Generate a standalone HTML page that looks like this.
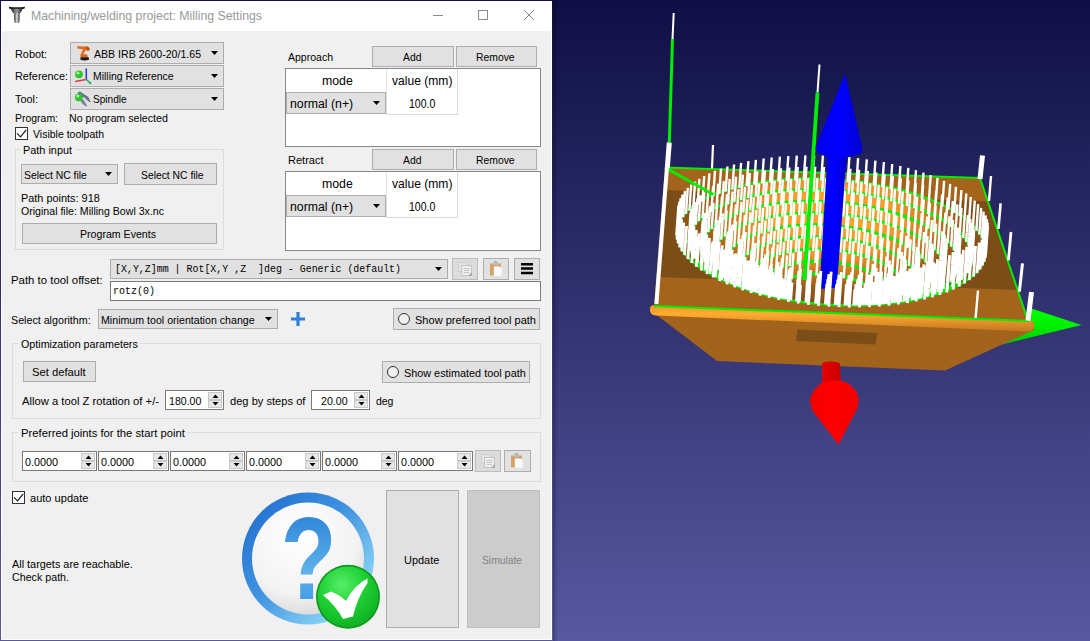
<!DOCTYPE html>
<html><head><meta charset="utf-8"><title>Machining/welding project: Milling Settings</title>
<style>
html,body{margin:0;padding:0}
body{width:1090px;height:641px;overflow:hidden;position:relative;background:linear-gradient(#0f0f45,#5858a0);font-family:"Liberation Sans",sans-serif}
.b{position:absolute;box-sizing:border-box}
.t{position:absolute;white-space:pre;transform-origin:0 50%;display:block}
#dlg{position:absolute;left:0;top:0;width:553px;height:641px}
#view{position:absolute;left:553px;top:0;width:537px;height:641px}
</style></head><body>
<div id="view"><svg width="537" height="641" viewBox="553 0 537 641" style="display:block">
<defs>
<linearGradient id="bg" x1="0" y1="0" x2="0" y2="1"><stop offset="0" stop-color="#0f0f45"/><stop offset="1" stop-color="#5858a0"/></linearGradient>
<linearGradient id="edge" x1="0" y1="0" x2="0.04" y2="1"><stop offset="0" stop-color="#f09a28"/><stop offset=".35" stop-color="#ffab30"/><stop offset="1" stop-color="#c47a20"/></linearGradient>
<radialGradient id="bowl" cx=".5" cy=".32" r=".5" gradientTransform="translate(.5 .32) scale(1 1.3) translate(-.5 -.32)"><stop offset="0" stop-color="#ffa62e"/><stop offset=".4" stop-color="#f89c2b"/><stop offset=".66" stop-color="#c47a21"/><stop offset=".85" stop-color="#94591a"/><stop offset="1" stop-color="#84501a"/></radialGradient>
<linearGradient id="blu" x1="0" x2="1"><stop offset="0" stop-color="#0000e6"/><stop offset=".5" stop-color="#0000ff"/><stop offset="1" stop-color="#0000d0"/></linearGradient>
<linearGradient id="shadow" x1="0" x2="1"><stop offset="0" stop-color="#000" stop-opacity=".3"/><stop offset="1" stop-color="#000" stop-opacity="0"/></linearGradient>
<linearGradient id="garr" x1="0" y1="0" x2="0" y2="1"><stop offset="0" stop-color="#00ff00"/><stop offset=".5" stop-color="#00f000"/><stop offset="1" stop-color="#00c400"/></linearGradient>
<linearGradient id="redsh" x1="0" x2="1"><stop offset="0" stop-color="#e80000"/><stop offset=".5" stop-color="#d80000"/><stop offset="1" stop-color="#c80000"/></linearGradient>
<linearGradient id="redc" x1="0" x2="1"><stop offset="0" stop-color="#f00000"/><stop offset=".45" stop-color="#ff0000"/><stop offset="1" stop-color="#f20000"/></linearGradient>
</defs>
<rect x="553" y="0" width="537" height="641" fill="url(#bg)"/>
<rect x="552" y="0" width="6" height="641" fill="url(#shadow)"/>
<path d="M1081.5 325L1030 308L1002 344.5Z" fill="url(#garr)"/>
<path d="M650 310L717 361L945 370.5L1034 330L1034 322L650 306Z" fill="#a2631c"/>
<path d="M797.5 329.5L877.5 333L875.5 344.5L796 341Z" fill="#7b4e18"/>
<path d="M654 305L1028 320Q1035 321 1034 327Q1033 332 1027 331.5L656 315.5Q650 315 650 310Q650.5 305 654 305Z" fill="url(#edge)"/>
<path d="M665.0 167.5L980.0 178.0L1028.0 321.0L654.0 306.0Z" fill="#a4641c"/>
<path d="M663.3 190L988 201.5L1017.5 290L657.3 277Z" fill="#7c4d17"/>
<clipPath id="rimclip"><path d="M984.6 242.7L983.3 239.4L981.6 236.1L979.6 232.8L977.1 229.6L974.3 226.4L971.0 223.2L967.5 220.1L963.6 217.1L959.3 214.2L954.8 211.3L949.9 208.6L944.8 205.9L939.4 203.3L933.7 200.8L927.8 198.5L921.7 196.2L915.4 194.1L908.9 192.1L902.2 190.2L895.4 188.5L888.4 186.9L881.3 185.4L874.1 184.1L866.8 182.9L859.4 181.8L852.0 180.9L844.5 180.1L837.1 179.5L829.6 179.0L822.1 178.7L814.6 178.5L807.2 178.5L799.8 178.6L792.5 178.9L785.3 179.3L778.2 179.9L771.2 180.6L764.4 181.4L757.7 182.4L751.1 183.6L744.8 184.9L738.6 186.3L732.7 187.9L727.0 189.6L721.5 191.4L716.2 193.3L711.3 195.4L706.6 197.6L702.2 199.9L698.1 202.3L694.4 204.9L691.0 207.5L687.9 210.2L685.1 213.1L682.8 216.0L680.8 218.9L679.2 222.0L678.0 225.1L677.2 228.3L676.8 231.5L676.8 234.8L677.3 238.1L678.1 241.4L679.4 244.7L681.1 248.1L683.2 251.4L685.8 254.7L688.8 258.0L692.2 261.3L696.0 264.5L700.3 267.7L704.9 270.8L709.9 273.8L715.3 276.8L721.1 279.6L727.2 282.4L733.7 285.0L740.5 287.6L747.5 289.9L754.9 292.2L762.5 294.3L770.3 296.2L778.4 298.0L786.6 299.5L795.0 301.0L803.5 302.2L812.1 303.2L820.8 304.1L829.5 304.7L838.3 305.2L847.0 305.4L855.6 305.5L864.2 305.3L872.7 304.9L881.0 304.4L889.2 303.6L897.2 302.6L905.0 301.5L912.5 300.2L919.8 298.6L926.7 296.9L933.4 295.1L939.7 293.1L945.7 290.9L951.3 288.6L956.5 286.1L961.3 283.5L965.7 280.8L969.7 278.0L973.3 275.1L976.4 272.1L979.1 269.0L981.3 265.8L983.1 262.6L984.4 259.4L985.3 256.1L985.8 252.8L985.8 249.4L985.4 246.1L984.6 242.7Z"/></clipPath>
<path d="M984.6 242.7L983.3 239.4L981.6 236.1L979.6 232.8L977.1 229.6L974.3 226.4L971.0 223.2L967.5 220.1L963.6 217.1L959.3 214.2L954.8 211.3L949.9 208.6L944.8 205.9L939.4 203.3L933.7 200.8L927.8 198.5L921.7 196.2L915.4 194.1L908.9 192.1L902.2 190.2L895.4 188.5L888.4 186.9L881.3 185.4L874.1 184.1L866.8 182.9L859.4 181.8L852.0 180.9L844.5 180.1L837.1 179.5L829.6 179.0L822.1 178.7L814.6 178.5L807.2 178.5L799.8 178.6L792.5 178.9L785.3 179.3L778.2 179.9L771.2 180.6L764.4 181.4L757.7 182.4L751.1 183.6L744.8 184.9L738.6 186.3L732.7 187.9L727.0 189.6L721.5 191.4L716.2 193.3L711.3 195.4L706.6 197.6L702.2 199.9L698.1 202.3L694.4 204.9L691.0 207.5L687.9 210.2L685.1 213.1L682.8 216.0L680.8 218.9L679.2 222.0L678.0 225.1L677.2 228.3L676.8 231.5L676.8 234.8L677.3 238.1L678.1 241.4L679.4 244.7L681.1 248.1L683.2 251.4L685.8 254.7L688.8 258.0L692.2 261.3L696.0 264.5L700.3 267.7L704.9 270.8L709.9 273.8L715.3 276.8L721.1 279.6L727.2 282.4L733.7 285.0L740.5 287.6L747.5 289.9L754.9 292.2L762.5 294.3L770.3 296.2L778.4 298.0L786.6 299.5L795.0 301.0L803.5 302.2L812.1 303.2L820.8 304.1L829.5 304.7L838.3 305.2L847.0 305.4L855.6 305.5L864.2 305.3L872.7 304.9L881.0 304.4L889.2 303.6L897.2 302.6L905.0 301.5L912.5 300.2L919.8 298.6L926.7 296.9L933.4 295.1L939.7 293.1L945.7 290.9L951.3 288.6L956.5 286.1L961.3 283.5L965.7 280.8L969.7 278.0L973.3 275.1L976.4 272.1L979.1 269.0L981.3 265.8L983.1 262.6L984.4 259.4L985.3 256.1L985.8 252.8L985.8 249.4L985.4 246.1L984.6 242.7Z" fill="url(#bowl)"/>
<g clip-path="url(#rimclip)" fill="none" stroke="#00ee00" stroke-width="3.2">
<path d="M722.1 204.8L728.1 202.5L734.5 200.3L741.2 198.2L748.3 196.4L755.7 194.9L763.3 193.5L771.3 192.3L779.4 191.4L787.7 190.7L796.2 190.2L804.8 189.9L813.6 189.9L822.3 190.1L831.2 190.5L840.0 191.1L848.8 192.0L857.5 193.1L866.2 194.4L874.7 195.9L883.0 197.7L891.2 199.6L899.2 201.7L906.9 204.1L914.3 206.6L921.4 209.3L928.2 212.2L934.5 215.2L940.5 218.4L946.0 221.7L951.1 225.1L955.7 228.7L959.8 232.4L963.3 236.1L966.3 239.9L968.6 243.8L970.4 247.7L971.6 251.7L972.1 255.6L972.0 259.5L971.2 263.4L969.7 267.3L967.6 271.0L964.9 274.7L961.4 278.3L957.4 281.7L952.7 285.0L947.4 288.2L941.4 291.1L935.0 293.8L927.9 296.4L920.4 298.7L912.4 300.7L904.0 302.5L895.1 304.0L886.0 305.2L876.5 306.1L866.8 306.8L856.9 307.1L846.8 307.2L836.7 306.9L826.6 306.4L816.5 305.5L806.4 304.4L796.5 302.9L786.8 301.2L777.3 299.3L768.2 297.0L759.3 294.6L750.9 291.9L742.8 289.0L735.3 285.9L728.2 282.7L721.6 279.3L715.6 275.8L710.2 272.1L705.3 268.4L701.1 264.6L697.5 260.7L694.5 256.8L692.2 252.8L690.4 248.9L689.4 245.0L688.9 241.1L689.1 237.3L689.9 233.5L691.3 229.8L693.3 226.2L695.8 222.7L698.9 219.4L702.6 216.2L706.8 213.1L711.4 210.2L716.5 207.4L722.1 204.8"/>
<path d="M730.9 215.3L736.9 212.8L743.4 210.6L750.3 208.6L757.6 206.9L765.2 205.3L773.1 204.0L781.2 203.0L789.6 202.2L798.2 201.7L806.9 201.4L815.7 201.4L824.6 201.7L833.5 202.2L842.4 202.9L851.3 204.0L860.1 205.2L868.7 206.7L877.2 208.5L885.4 210.5L893.4 212.7L901.2 215.1L908.5 217.7L915.5 220.5L922.1 223.5L928.3 226.7L934.0 230.1L939.1 233.6L943.7 237.2L947.8 240.9L951.2 244.7L954.0 248.6L956.1 252.6L957.6 256.5L958.3 260.5L958.3 264.5L957.6 268.5L956.2 272.4L954.1 276.2L951.2 279.9L947.6 283.4L943.3 286.9L938.3 290.1L932.6 293.2L926.3 296.0L919.4 298.6L912.0 300.9L904.0 303.0L895.5 304.8L886.7 306.2L877.4 307.4L867.9 308.2L858.1 308.7L848.1 308.9L838.0 308.8L827.9 308.3L817.8 307.4L807.7 306.3L797.9 304.8L788.2 303.1L778.8 301.0L769.8 298.7L761.1 296.1L752.9 293.3L745.1 290.3L737.9 287.0L731.3 283.6L725.3 280.1L719.8 276.4L715.1 272.6L711.0 268.7L707.6 264.8L704.9 260.8L703.0 256.8L701.7 252.8L701.1 248.9L701.2 245.0L702.0 241.2L703.5 237.4L705.6 233.8L708.4 230.3L711.8 227.0L715.7 223.8L720.3 220.8L725.3 217.9L730.9 215.3"/>
<path d="M739.8 225.8L745.8 223.3L752.3 221.1L759.3 219.2L766.7 217.5L774.4 216.0L782.4 214.9L790.7 214.0L799.2 213.4L807.9 213.1L816.8 213.1L825.6 213.4L834.6 213.9L843.5 214.8L852.3 215.9L861.0 217.3L869.5 219.0L877.8 220.9L885.8 223.1L893.5 225.6L900.8 228.2L907.7 231.1L914.2 234.2L920.1 237.5L925.5 240.9L930.3 244.5L934.5 248.2L938.0 252.0L940.8 255.9L942.8 259.9L944.2 263.8L944.7 267.8L944.5 271.8L943.5 275.7L941.7 279.6L939.1 283.3L935.7 286.9L931.5 290.3L926.6 293.6L920.9 296.6L914.6 299.4L907.7 301.9L900.1 304.1L892.0 306.1L883.4 307.7L874.4 308.9L865.1 309.9L855.4 310.4L845.6 310.6L835.6 310.4L825.6 309.9L815.7 309.0L805.8 307.8L796.2 306.2L786.8 304.3L777.7 302.1L769.0 299.6L760.8 296.8L753.1 293.8L746.0 290.6L739.5 287.2L733.6 283.6L728.5 279.9L724.1 276.0L720.4 272.1L717.5 268.1L715.3 264.2L713.9 260.2L713.3 256.2L713.4 252.3L714.3 248.5L715.9 244.8L718.3 241.2L721.3 237.7L725.0 234.5L729.4 231.4L734.3 228.5L739.8 225.8"/>
<path d="M748.7 236.4L754.8 233.9L761.5 231.7L768.7 229.8L776.3 228.2L784.3 226.9L792.6 225.9L801.2 225.2L810.0 224.9L819.0 224.9L828.0 225.3L837.0 226.0L846.0 227.0L854.8 228.4L863.5 230.0L871.9 232.0L880.0 234.3L887.7 236.8L894.9 239.6L901.6 242.6L907.8 245.9L913.4 249.3L918.2 253.0L922.4 256.8L925.8 260.6L928.4 264.6L930.1 268.7L931.0 272.7L931.0 276.7L930.1 280.7L928.3 284.6L925.6 288.4L922.0 292.0L917.5 295.4L912.3 298.5L906.2 301.5L899.4 304.1L891.9 306.4L883.8 308.3L875.1 309.9L866.0 311.1L856.6 311.9L846.8 312.2L836.9 312.2L826.9 311.8L817.0 310.9L807.1 309.7L797.5 308.0L788.1 306.0L779.2 303.7L770.8 301.0L762.9 298.1L755.6 294.9L749.0 291.4L743.2 287.8L738.1 284.0L733.9 280.1L730.5 276.1L727.9 272.1L726.3 268.0L725.5 264.0L725.6 260.1L726.5 256.2L728.3 252.4L730.9 248.8L734.3 245.4L738.4 242.2L743.3 239.2L748.7 236.4"/>
<path d="M757.8 247.1L763.9 244.6L770.6 242.4L777.9 240.6L785.7 239.1L793.8 238.0L802.3 237.2L811.1 236.9L820.0 236.9L829.0 237.3L838.0 238.1L846.9 239.3L855.6 240.8L864.1 242.7L872.2 244.9L879.9 247.5L887.0 250.3L893.6 253.4L899.5 256.8L904.7 260.3L909.0 264.1L912.5 267.9L915.2 271.9L916.8 275.9L917.5 280.0L917.2 284.0L915.9 287.9L913.6 291.7L910.3 295.4L906.0 298.8L900.8 301.9L894.7 304.8L887.8 307.3L880.2 309.5L871.9 311.2L863.1 312.6L853.9 313.4L844.3 313.9L834.6 313.8L824.7 313.3L814.9 312.4L805.3 311.0L795.9 309.2L787.0 307.0L778.5 304.4L770.7 301.5L763.5 298.3L757.1 294.9L751.5 291.2L746.9 287.4L743.1 283.4L740.3 279.4L738.5 275.4L737.7 271.4L737.8 267.4L738.9 263.6L741.0 259.8L743.9 256.3L747.8 253.0L752.4 249.9L757.8 247.1"/>
<path d="M766.9 257.9L773.1 255.4L780.1 253.2L787.7 251.5L795.8 250.2L804.4 249.4L813.2 249.0L822.3 249.1L831.5 249.6L840.5 250.6L849.4 252.1L858.0 254.0L866.2 256.3L873.9 258.9L880.9 262.0L887.1 265.3L892.5 268.9L896.9 272.7L900.3 276.6L902.6 280.7L903.8 284.8L903.8 288.9L902.7 292.9L900.3 296.7L896.8 300.4L892.1 303.7L886.4 306.8L879.7 309.4L872.2 311.7L863.9 313.4L855.0 314.6L845.6 315.4L835.9 315.5L826.0 315.2L816.2 314.2L806.6 312.8L797.3 310.9L788.5 308.5L780.3 305.7L773.0 302.5L766.5 299.1L761.0 295.3L756.5 291.4L753.2 287.4L750.9 283.3L749.9 279.2L750.0 275.2L751.3 271.3L753.7 267.5L757.1 264.0L761.5 260.8L766.9 257.9"/>
<path d="M776.1 268.8L782.5 266.3L789.8 264.2L797.8 262.6L806.4 261.6L815.4 261.2L824.7 261.4L834.0 262.1L843.1 263.5L851.9 265.3L860.2 267.7L867.8 270.6L874.5 273.8L880.2 277.4L884.7 281.3L888.0 285.4L890.0 289.5L890.5 293.7L889.5 297.8L887.1 301.7L883.3 305.4L878.1 308.6L871.8 311.5L864.3 313.8L855.9 315.5L846.8 316.7L837.2 317.1L827.3 316.9L817.4 316.1L807.8 314.6L798.6 312.5L790.0 309.8L782.4 306.7L775.8 303.2L770.3 299.4L766.2 295.4L763.5 291.2L762.2 287.0L762.3 282.9L763.8 279.0L766.6 275.2L770.8 271.8L776.1 268.8"/>
<path d="M785.4 279.8L791.8 277.3L799.3 275.4L807.6 274.1L816.5 273.6L825.7 273.8L835.0 274.8L843.9 276.4L852.2 278.7L859.7 281.5L866.1 284.9L871.2 288.6L874.8 292.6L876.7 296.8L876.9 300.9L875.3 304.9L872.0 308.7L867.0 311.9L860.6 314.7L852.9 316.8L844.2 318.1L834.8 318.7L825.1 318.5L815.5 317.4L806.2 315.6L797.6 313.2L790.0 310.1L783.8 306.5L779.0 302.7L775.8 298.6L774.4 294.4L774.7 290.3L776.7 286.4L780.3 282.9L785.4 279.8"/>
</g>
<path d="M984.6 242.7L983.3 239.4L981.6 236.1L979.6 232.8L977.1 229.6L974.3 226.4L971.0 223.2L967.5 220.1L963.6 217.1L959.3 214.2L954.8 211.3L949.9 208.6L944.8 205.9L939.4 203.3L933.7 200.8L927.8 198.5L921.7 196.2L915.4 194.1L908.9 192.1L902.2 190.2L895.4 188.5L888.4 186.9L881.3 185.4L874.1 184.1L866.8 182.9L859.4 181.8L852.0 180.9L844.5 180.1L837.1 179.5L829.6 179.0L822.1 178.7L814.6 178.5L807.2 178.5L799.8 178.6L792.5 178.9L785.3 179.3L778.2 179.9L771.2 180.6L764.4 181.4L757.7 182.4L751.1 183.6L744.8 184.9L738.6 186.3L732.7 187.9L727.0 189.6L721.5 191.4L716.2 193.3L711.3 195.4L706.6 197.6L702.2 199.9L698.1 202.3L694.4 204.9L691.0 207.5L687.9 210.2L685.1 213.1L682.8 216.0L680.8 218.9L679.2 222.0L678.0 225.1L677.2 228.3L676.8 231.5L676.8 234.8L677.3 238.1L678.1 241.4L679.4 244.7L681.1 248.1L683.2 251.4L685.8 254.7L688.8 258.0L692.2 261.3L696.0 264.5L700.3 267.7L704.9 270.8L709.9 273.8L715.3 276.8L721.1 279.6L727.2 282.4L733.7 285.0L740.5 287.6L747.5 289.9L754.9 292.2L762.5 294.3L770.3 296.2L778.4 298.0L786.6 299.5L795.0 301.0L803.5 302.2L812.1 303.2L820.8 304.1L829.5 304.7L838.3 305.2L847.0 305.4L855.6 305.5L864.2 305.3L872.7 304.9L881.0 304.4L889.2 303.6L897.2 302.6L905.0 301.5L912.5 300.2L919.8 298.6L926.7 296.9L933.4 295.1L939.7 293.1L945.7 290.9L951.3 288.6L956.5 286.1L961.3 283.5L965.7 280.8L969.7 278.0L973.3 275.1L976.4 272.1L979.1 269.0L981.3 265.8L983.1 262.6L984.4 259.4L985.3 256.1L985.8 252.8L985.8 249.4L985.4 246.1L984.6 242.7Z" fill="none" stroke="#00ee00" stroke-width="2.4"/>
<path d="M665.0 167.5L980.0 178.0L1028.0 321.0L654.0 306.0" fill="none" stroke="#00ee00" stroke-width="2"/>
<path d="M722.0 206.6L722.6 197.9M728.0 204.2L728.6 195.5M734.3 202.0L734.9 193.3M741.1 200.0L741.7 191.3M748.2 198.2L748.8 189.6M755.6 196.6L756.2 188.0M763.2 195.2L763.8 186.6M771.1 194.1L771.7 185.5M779.3 193.1L779.9 184.5M787.6 192.4L788.2 183.8M796.1 191.9L796.7 183.3M804.7 191.7L805.3 183.1M813.4 191.6L814.0 183.1M822.2 191.8L822.8 183.2M831.0 192.2L831.6 183.7M839.9 192.9L840.5 184.3M848.7 193.8L849.3 185.2M857.4 194.8L858.0 186.2M866.0 196.2L866.6 187.5M874.6 197.7L875.2 189.0M882.9 199.4L883.5 190.8M891.1 201.4L891.7 192.7M899.0 203.5L899.7 194.8M906.7 205.9L907.4 197.1M914.2 208.4L914.8 199.6M921.3 211.1L921.9 202.3M928.0 214.0L928.6 205.1M934.4 217.0L935.0 208.1M940.4 220.2L941.0 211.3M945.9 223.5L946.5 214.6M951.0 227.0L951.6 218.0M955.6 230.5L956.2 221.5M959.6 234.2L960.3 225.2M963.2 238.0L963.8 228.9M966.1 241.8L966.8 232.7M968.5 245.7L969.2 236.5M689.8 235.3L690.4 226.3M691.2 231.6L691.8 222.6M693.1 228.0L693.8 219.1M695.7 224.6L696.3 215.6M698.8 221.2L699.4 212.3M702.5 218.0L703.1 209.1M706.6 214.9L707.2 206.0M711.3 212.0L711.9 203.2M716.4 209.2L717.0 200.4M730.8 217.1L731.9 201.3M736.8 214.6L737.9 198.9M743.3 212.4L744.4 196.7M750.2 210.4L751.3 194.7M757.4 208.6L758.5 193.0M765.0 207.1L766.1 191.5M772.9 205.8L774.0 190.3M781.1 204.8L782.2 189.2M789.5 204.0L790.6 188.5M798.1 203.5L799.1 188.0M806.8 203.2L807.9 187.7M815.6 203.2L816.7 187.7M824.5 203.4L825.6 187.9M833.4 203.9L834.5 188.4M842.3 204.7L843.4 189.2M851.2 205.7L852.3 190.2M860.0 207.0L861.0 191.4M868.6 208.5L869.7 192.9M877.1 210.2L878.2 194.6M885.3 212.2L886.4 196.5M893.3 214.4L894.4 198.7M901.0 216.9L902.1 201.1M908.4 219.5L909.5 203.7M915.4 222.3L916.5 206.5M922.0 225.4L923.1 209.4M928.2 228.5L929.3 212.5M933.8 231.9L935.0 215.8M939.0 235.4L940.1 219.2M943.6 239.0L944.7 222.8M947.6 242.8L948.8 226.5M951.1 246.6L952.2 230.2M953.9 250.5L955.0 234.0M956.0 254.4L957.1 237.9M701.9 243.0L703.0 226.7M703.4 239.3L704.5 223.1M705.5 235.6L706.6 219.5M708.3 232.1L709.4 216.1M711.6 228.8L712.8 212.8M715.6 225.6L716.7 209.6M720.1 222.6L721.3 206.7M725.2 219.7L726.3 203.9M739.7 227.6L741.3 204.7M745.7 225.1L747.3 202.3M752.2 222.9L753.8 200.2M759.2 220.9L760.7 198.3M766.5 219.2L768.1 196.6M774.2 217.8L775.8 195.2M782.3 216.6L783.9 194.1M790.6 215.8L792.2 193.2M799.1 215.2L800.7 192.7M807.8 214.9L809.4 192.4M816.6 214.9L818.2 192.4M825.5 215.1L827.1 192.6M834.4 215.7L836.0 193.2M843.3 216.6L844.9 194.0M852.2 217.7L853.7 195.1M860.8 219.1L862.4 196.5M869.4 220.8L871.0 198.1M877.7 222.7L879.3 200.0M885.7 224.9L887.3 202.1M893.4 227.4L895.0 204.5M900.7 230.0L902.3 207.1M907.6 232.9L909.2 209.9M914.1 236.0L915.7 212.9M920.0 239.3L921.6 216.1M925.4 242.7L927.0 219.4M930.2 246.3L931.8 222.9M934.3 250.0L936.0 226.5M937.8 253.9L939.5 230.2M940.6 257.8L942.3 234.0M714.2 250.3L715.8 226.8M715.8 246.6L717.4 223.2M718.2 243.0L719.8 219.7M721.2 239.6L722.8 216.4M724.9 236.3L726.5 213.2M729.2 233.2L730.8 210.2M734.2 230.3L735.8 207.3M748.6 238.2L750.4 212.4M754.7 235.7L756.5 210.0M761.4 233.5L763.2 207.8M768.5 231.6L770.3 205.9M776.2 229.9L778.0 204.4M784.2 228.6L786.0 203.1M792.5 227.7L794.3 202.2M801.1 227.0L802.9 201.5M809.9 226.7L811.7 201.2M818.8 226.7L820.6 201.3M827.9 227.1L829.6 201.6M836.9 227.8L838.7 202.3M845.9 228.8L847.6 203.3M854.7 230.1L856.5 204.6M863.4 231.8L865.1 206.2M871.8 233.8L873.6 208.1M879.8 236.1L881.6 210.3M887.5 238.6L889.3 212.8M894.8 241.4L896.6 215.5M901.5 244.4L903.3 218.4M907.7 247.7L909.5 221.6M913.2 251.2L915.1 224.9M918.1 254.8L920.0 228.5M922.3 258.6L924.1 232.1M925.7 262.5L927.5 235.9M928.3 266.5L930.1 239.8M726.4 258.0L728.2 231.6M728.2 254.3L730.0 228.0M730.8 250.7L732.6 224.5M734.2 247.2L736.0 221.1M738.3 244.0L740.1 218.0M743.1 241.0L744.9 215.1M757.7 248.9L759.5 223.0M763.7 246.4L765.6 220.6M770.5 244.2L772.3 218.4M777.8 242.4L779.6 216.7M785.5 240.9L787.3 215.2M793.7 239.8L795.5 214.1M802.2 239.0L804.0 213.4M811.0 238.7L812.8 213.0M819.9 238.7L821.7 213.1M828.9 239.1L830.7 213.5M837.9 239.9L839.7 214.2M846.8 241.1L848.6 215.4M855.5 242.6L857.3 216.9M864.0 244.5L865.8 218.7M872.1 246.7L873.9 220.9M879.7 249.3L881.6 223.3M886.9 252.1L888.7 226.1M893.5 255.2L895.3 229.1M899.4 258.6L901.2 232.3M904.5 262.2L906.4 235.8M908.9 265.9L910.7 239.4M912.4 269.8L914.3 243.2M915.0 273.8L916.9 247.1M738.8 265.4L740.7 239.0M740.9 261.7L742.7 235.4M743.8 258.1L745.6 231.9M747.6 254.8L749.5 228.7M752.3 251.7L754.1 225.7M766.8 259.7L768.6 233.7M773.0 257.2L774.8 231.2M779.9 255.0L781.7 229.1M787.5 253.3L789.3 227.5M795.7 252.0L797.5 226.2M804.2 251.2L806.0 225.4M813.1 250.8L814.9 225.0M822.2 250.9L824.0 225.1M831.3 251.4L833.1 225.6M840.4 252.4L842.2 226.6M849.3 253.9L851.1 228.0M857.9 255.8L859.7 229.8M866.1 258.1L867.9 232.1M873.7 260.8L875.6 234.7M880.7 263.8L882.6 237.6M887.0 267.1L888.8 240.8M892.3 270.7L894.2 244.3M896.8 274.5L898.6 248.0M900.2 278.5L902.1 251.8M751.2 273.1L753.0 246.6M753.5 269.4L755.4 243.0M757.0 265.9L758.8 239.6M761.4 262.6L763.2 236.5M776.0 270.7L777.8 244.5M782.3 268.1L784.2 242.0M789.6 266.0L791.4 240.0M797.7 264.4L799.5 238.5M806.3 263.4L808.1 237.5M815.3 263.0L817.1 237.1M824.6 263.2L826.4 237.3M833.8 264.0L835.7 238.0M843.0 265.3L844.8 239.3M851.8 267.2L853.6 241.1M860.1 269.5L861.9 243.4M867.6 272.4L869.5 246.2M874.4 275.7L876.2 249.3M880.1 279.3L881.9 252.8M884.6 283.1L886.5 256.6M887.9 287.2L889.8 260.5M763.7 280.8L765.5 254.3M766.5 277.1L768.4 250.7M770.7 273.7L772.5 247.4M785.3 281.7L787.1 255.4M791.7 279.1L793.5 252.9M799.2 277.2L801.0 251.1M807.5 276.0L809.3 249.9M816.4 275.5L818.2 249.4M825.6 275.7L827.4 249.6M834.8 276.6L836.7 250.5M843.7 278.2L845.6 252.0M852.1 280.5L853.9 254.3M859.6 283.4L861.4 257.0M866.0 286.7L867.8 260.3M871.1 290.5L872.9 263.9M874.6 294.5L876.5 267.8M776.5 288.3L778.4 261.8M780.2 284.7L782.0 258.4" clip-path="url(#rimclip)" stroke="#fff" stroke-width="2.4" fill="none"/>
<path d="M713.2 196.3L715.0 170.9M719.3 193.9L721.0 168.6M725.6 191.7L727.4 166.5M732.3 189.7L734.1 164.5M739.3 187.8L741.1 162.8M746.6 186.2L748.4 161.2M754.2 184.7L755.9 159.8M762.0 183.5L763.7 158.5M770.0 182.4L771.7 157.5M778.2 181.6L779.9 156.7M786.6 180.9L788.3 156.1M795.1 180.5L796.8 155.6M803.7 180.3L805.4 155.4M812.4 180.2L814.2 155.4M821.2 180.4L822.9 155.5M830.0 180.8L831.7 155.9M838.8 181.4L840.6 156.5M847.6 182.2L849.4 157.2M856.4 183.2L858.1 158.2M865.1 184.4L866.8 159.4M873.7 185.7L875.4 160.7M882.1 187.3L883.9 162.2M890.5 189.1L892.2 164.0M898.6 191.1L900.4 165.9M906.6 193.2L908.3 167.9M914.3 195.6L916.0 170.2M921.7 198.0L923.5 172.6M928.9 200.7L930.7 175.2M935.7 203.5L937.5 177.9M942.3 206.5L944.1 180.8M948.4 209.6L950.2 183.8M954.2 212.8L956.0 186.9M959.5 216.2L961.4 190.2M964.5 219.7L966.3 193.5M968.9 223.3L970.8 197.0M972.9 227.0L974.8 200.6M976.4 230.7L978.2 204.2M979.3 234.5L981.2 207.9M981.8 238.4L983.6 211.6M677.6 228.0L679.4 201.6M678.9 224.3L680.7 198.0M680.7 220.7L682.5 194.6M683.1 217.2L684.9 191.2M686.0 213.8L687.8 187.9M689.4 210.5L691.2 184.7M693.3 207.4L695.1 181.7M697.6 204.4L699.4 178.8M702.4 201.5L704.2 176.0M707.6 198.8L709.4 173.4M722.6 197.9L723.8 181.1M728.6 195.5L729.7 178.8M734.9 193.3L736.1 176.7M741.7 191.3L742.9 174.7M748.8 189.6L749.9 173.0M756.2 188.0L757.3 171.5M763.8 186.6L765.0 170.1M771.7 185.5L772.9 169.0M779.9 184.5L781.0 168.1M788.2 183.8L789.4 167.4M796.7 183.3L797.8 166.9M805.3 183.1L806.5 166.7M814.0 183.1L815.2 166.6M822.8 183.2L824.0 166.8M831.6 183.7L832.8 167.2M840.5 184.3L841.6 167.8M849.3 185.2L850.4 168.7M858.0 186.2L859.1 169.7M866.6 187.5L867.8 171.0M875.2 189.0L876.3 172.5M883.5 190.8L884.7 174.2M891.7 192.7L892.9 176.0M899.7 194.8L900.8 178.1M907.4 197.1L908.5 180.4M914.8 199.6L916.0 182.8M921.9 202.3L923.1 185.4M928.6 205.1L929.8 188.2M935.0 208.1L936.2 191.2M941.0 211.3L942.2 194.3M946.5 214.6L947.7 197.5M951.6 218.0L952.8 200.8M956.2 221.5L957.4 204.3M960.3 225.2L961.5 207.8M963.8 228.9L965.0 211.5M966.8 232.7L968.0 215.2M969.2 236.5L970.4 218.9M690.4 226.3L691.6 208.9M691.8 222.6L693.0 205.4M693.8 219.1L695.0 201.9M696.3 215.6L697.5 198.5M699.4 212.3L700.6 195.2M703.1 209.1L704.3 192.1M707.2 206.0L708.4 189.1M711.9 203.2L713.1 186.3M717.0 200.4L718.2 183.6M731.9 201.3L732.6 191.5M737.9 198.9L738.6 189.1M744.4 196.7L745.1 186.9M751.3 194.7L752.0 185.0M758.5 193.0L759.2 183.3M766.1 191.5L766.8 181.8M774.0 190.3L774.7 180.6M782.2 189.2L782.9 179.6M790.6 188.5L791.2 178.8M799.1 188.0L799.8 178.3M807.9 187.7L808.5 178.0M816.7 187.7L817.4 178.0M825.6 187.9L826.2 178.3M834.5 188.4L835.2 178.8M843.4 189.2L844.1 179.5M852.3 190.2L853.0 180.5M861.0 191.4L861.7 181.7M869.7 192.9L870.4 183.2M878.2 194.6L878.8 184.9M886.4 196.5L887.1 186.8M894.4 198.7L895.1 188.9M902.1 201.1L902.8 191.3M909.5 203.7L910.2 193.8M916.5 206.5L917.2 196.6M923.1 209.4L923.8 199.5M929.3 212.5L930.0 202.6M935.0 215.8L935.7 205.8M940.1 219.2L940.8 209.2M944.7 222.8L945.5 212.7M948.8 226.5L949.5 216.3M952.2 230.2L952.9 220.0M955.0 234.0L955.7 223.8M957.1 237.9L957.9 227.6M703.0 226.7L703.7 216.6M704.5 223.1L705.2 213.0M706.6 219.5L707.3 209.5M709.4 216.1L710.1 206.1M712.8 212.8L713.5 202.8M716.7 209.6L717.4 199.7M721.3 206.7L721.9 196.8M726.3 203.9L727.0 194.0M741.3 204.7L741.5 201.9M747.3 202.3L747.5 199.5M753.8 200.2L754.0 197.4M760.7 198.3L760.9 195.5M768.1 196.6L768.3 193.8M775.8 195.2L776.0 192.4M783.9 194.1L784.1 191.3M792.2 193.2L792.4 190.4M800.7 192.7L800.9 189.9M809.4 192.4L809.6 189.6M818.2 192.4L818.4 189.6M827.1 192.6L827.3 189.8M836.0 193.2L836.2 190.4M844.9 194.0L845.1 191.2M853.7 195.1L853.9 192.3M862.4 196.5L862.6 193.7M871.0 198.1L871.2 195.3M879.3 200.0L879.5 197.2M887.3 202.1L887.5 199.3M895.0 204.5L895.2 201.6M902.3 207.1L902.5 204.2M909.2 209.9L909.4 207.0M915.7 212.9L915.9 210.0M921.6 216.1L921.8 213.2M927.0 219.4L927.2 216.5M931.8 222.9L932.0 220.0M936.0 226.5L936.2 223.6M939.5 230.2L939.7 227.3M942.3 234.0L942.5 231.1M715.8 226.8L716.0 223.9M717.4 223.2L717.7 220.3M719.8 219.7L720.0 216.8M722.8 216.4L723.0 213.5M726.5 213.2L726.7 210.3M730.8 210.2L731.0 207.3M735.8 207.3L736.0 204.5" stroke="#fff" stroke-width="2.4" fill="none"/>
<path d="M827.6 152L846.8 153L836.8 287.5L819.5 289Z" fill="url(#blu)"/>
<path d="M970.3 249.6L970.9 240.4M971.4 253.5L972.1 244.3M972.0 257.5L972.6 248.2M971.8 261.4L972.5 252.1M971.0 265.3L971.7 255.9M969.6 269.2L970.3 259.7M967.5 273.0L968.2 263.5M964.7 276.7L965.4 267.1M961.3 280.2L962.0 270.7M957.2 283.7L957.9 274.1M952.5 287.0L953.2 277.4M947.2 290.1L947.9 280.5M941.3 293.1L942.0 283.4M934.8 295.8L935.5 286.1M927.8 298.4L928.5 288.6M920.3 300.6L921.0 290.9M912.3 302.7L913.0 292.9M903.8 304.5L904.5 294.6M895.0 306.0L895.7 296.1M885.8 307.2L886.5 297.4M876.4 308.2L877.1 298.3M866.6 308.8L867.3 298.9M856.7 309.1L857.4 299.3M846.7 309.2L847.4 299.3M836.6 308.9L837.3 299.1M826.4 308.4L827.1 298.5M816.3 307.5L817.0 297.7M806.3 306.4L807.0 296.5M796.4 304.9L797.1 295.1M786.7 303.2L787.4 293.4M777.2 301.2L777.9 291.5M768.0 299.0L768.7 289.3M759.2 296.6L759.9 286.8M750.7 293.9L751.4 284.2M742.7 291.0L743.4 281.3M735.1 287.9L735.8 278.3M728.0 284.7L728.7 275.1M721.5 281.2L722.2 271.7M715.5 277.7L716.1 268.2M710.0 274.1L710.7 264.6M705.2 270.3L705.9 260.9M701.0 266.5L701.6 257.1M697.4 262.6L698.0 253.2M694.4 258.7L695.0 249.3M692.0 254.7L692.7 245.4M690.3 250.8L691.0 241.5M689.2 246.8L689.9 237.7M688.8 242.9L689.4 233.8M689.0 239.1L689.6 230.0M957.4 258.4L958.6 241.8M958.2 262.4L959.3 245.7M958.2 266.4L959.4 249.7M957.5 270.4L958.7 253.5M956.1 274.3L957.3 257.4M953.9 278.1L955.1 261.1M951.1 281.8L952.3 264.7M947.5 285.4L948.7 268.2M943.2 288.8L944.4 271.6M938.2 292.1L939.4 274.8M932.5 295.1L933.7 277.8M926.2 298.0L927.4 280.6M919.3 300.6L920.5 283.1M911.8 302.9L913.1 285.4M903.8 305.0L905.1 287.5M895.4 306.7L896.6 289.2M886.5 308.2L887.7 290.6M877.3 309.4L878.5 291.8M867.7 310.2L869.0 292.6M857.9 310.7L859.2 293.1M848.0 310.9L849.2 293.3M837.9 310.7L839.1 293.1M827.7 310.3L829.0 292.6M817.6 309.4L818.9 291.8M807.6 308.3L808.8 290.7M797.7 306.8L799.0 289.3M788.1 305.1L789.3 287.6M778.7 303.0L779.9 285.6M769.6 300.7L770.8 283.3M761.0 298.1L762.2 280.7M752.7 295.3L753.9 278.0M745.0 292.2L746.2 275.0M737.8 289.0L739.0 271.8M731.2 285.6L732.4 268.5M725.1 282.0L726.3 265.0M719.7 278.3L720.9 261.3M715.0 274.5L716.1 257.6M710.9 270.6L712.1 253.8M707.5 266.7L708.7 249.9M704.8 262.7L706.0 246.0M702.8 258.7L704.0 242.1M701.6 254.7L702.7 238.2M701.0 250.7L702.1 234.3M701.1 246.8L702.2 230.5M942.7 261.7L944.4 237.9M944.0 265.7L945.7 241.8M944.6 269.7L946.3 245.6M944.4 273.7L946.1 249.5M943.3 277.6L945.0 253.3M941.5 281.5L943.2 257.1M938.9 285.2L940.6 260.7M935.5 288.8L937.2 264.2M931.4 292.3L933.1 267.6M926.4 295.5L928.2 270.7M920.8 298.6L922.5 273.7M914.5 301.3L916.2 276.4M907.5 303.9L909.3 278.8M900.0 306.1L901.7 281.0M891.9 308.0L893.6 282.9M883.3 309.6L885.0 284.5M874.3 310.9L876.0 285.7M864.9 311.8L866.7 286.6M855.3 312.4L857.1 287.1M845.5 312.6L847.2 287.3M835.5 312.4L837.3 287.2M825.5 311.9L827.3 286.6M815.5 311.0L817.3 285.8M805.7 309.7L807.4 284.6M796.0 308.2L797.8 283.0M786.6 306.3L788.4 281.2M777.5 304.0L779.3 279.0M768.9 301.5L770.6 276.6M760.7 298.8L762.4 273.9M753.0 295.8L754.7 271.0M745.9 292.5L747.6 267.8M739.4 289.1L741.1 264.5M733.5 285.5L735.2 261.0M728.4 281.8L730.1 257.4M723.9 277.9L725.6 253.6M720.2 274.0L721.9 249.8M717.3 270.0L719.0 246.0M715.2 266.0L716.8 242.1M713.8 262.0L715.4 238.2M713.1 258.1L714.8 234.4M713.3 254.2L714.9 230.6M930.0 270.5L931.9 243.7M930.9 274.6L932.8 247.4M930.9 278.6L932.8 251.0M930.0 282.6L931.9 254.5M928.2 286.5L930.2 257.9M925.5 290.3L927.5 261.2M921.9 293.9L923.9 264.4M917.4 297.3L919.5 267.4M912.1 300.5L914.2 270.2M906.0 303.4L908.2 272.7M899.2 306.0L901.4 275.0M891.7 308.3L893.9 277.0M883.6 310.3L885.8 278.7M875.0 311.8L877.2 280.1M865.9 313.0L868.1 281.1M856.4 313.8L858.7 281.8M846.7 314.2L848.9 282.1M836.8 314.2L839.0 282.0M826.8 313.7L829.0 281.6M816.8 312.9L819.1 280.8M807.0 311.6L809.2 279.7M797.3 310.0L799.6 278.2M788.0 308.0L790.2 276.4M779.1 305.6L781.3 274.3M770.6 303.0L772.8 271.9M762.7 300.0L764.9 269.3M755.5 296.8L757.6 266.4M748.9 293.3L751.0 263.4M743.0 289.7L745.1 260.1M738.0 285.9L740.0 256.8M733.7 282.0L735.7 253.3M730.3 278.0L732.3 249.8M727.8 274.0L729.7 246.2M726.1 269.9L728.0 242.6M725.4 265.9L727.2 239.1M725.4 261.9L727.3 235.4M916.7 277.8L918.6 251.0M917.4 281.9L919.3 254.6M917.1 285.9L919.0 258.2M915.8 289.8L917.7 261.7M913.4 293.6L915.4 265.0M910.1 297.3L912.2 268.2M905.9 300.7L907.9 271.3M900.6 303.9L902.7 274.0M894.6 306.7L896.7 276.5M887.7 309.3L889.8 278.8M880.1 311.4L882.2 280.6M871.8 313.2L874.0 282.2M863.0 314.5L865.2 283.3M853.8 315.4L856.0 284.1M844.2 315.8L846.4 284.4M834.4 315.8L836.6 284.4M824.6 315.3L826.8 283.9M814.8 314.4L817.0 283.0M805.2 313.0L807.3 281.8M795.8 311.2L798.0 280.1M786.8 308.9L789.0 278.1M778.4 306.4L780.5 275.8M770.5 303.5L772.7 273.2M763.4 300.2L765.5 270.4M757.0 296.8L759.0 267.3M751.4 293.1L753.4 264.1M746.7 289.3L748.7 260.7M743.0 285.3L744.9 257.2M740.2 281.3L742.1 253.6M738.4 277.3L740.3 250.0M737.5 273.2L739.4 246.5M737.7 269.3L739.5 242.7M902.5 282.6L904.4 255.8M903.7 286.7L905.6 259.7M903.7 290.8L905.6 263.3M902.5 294.8L904.5 266.9M900.2 298.6L902.2 270.3M896.7 302.3L898.7 273.5M892.0 305.7L894.0 276.5M886.3 308.7L888.4 279.1M879.6 311.4L881.7 281.5M872.1 313.6L874.2 283.4M863.7 315.3L865.9 284.9M854.8 316.6L857.0 286.0M845.4 317.3L847.6 286.6M835.7 317.5L837.9 286.7M825.9 317.1L828.0 286.4M816.1 316.2L818.2 285.5M806.4 314.8L808.6 284.2M797.1 312.8L799.3 282.5M788.3 310.4L790.4 280.4M780.2 307.6L782.3 277.8M772.8 304.5L774.9 275.0M766.3 301.0L768.4 271.9M760.8 297.2L762.8 268.6M756.4 293.3L758.3 265.1M753.0 289.3L755.0 261.5M750.8 285.2L752.7 257.9M749.8 281.1L751.7 254.3M749.9 277.0L751.8 250.4M889.8 291.4L891.7 264.6M890.3 295.6L892.2 268.4M889.4 299.7L891.3 272.0M887.0 303.6L888.9 275.5M883.2 307.3L885.2 278.7M878.0 310.6L880.0 281.6M871.6 313.4L873.7 284.1M864.2 315.7L866.2 286.1M855.8 317.5L857.8 287.7M846.7 318.6L848.7 288.6M837.0 319.1L839.1 289.0M827.2 318.9L829.3 288.8M817.3 318.0L819.4 288.0M807.6 316.5L809.7 286.6M798.4 314.4L800.5 284.8M789.9 311.8L792.0 282.4M782.2 308.6L784.3 279.6M775.6 305.1L777.6 276.5M770.2 301.3L772.2 273.1M766.1 297.3L768.0 269.5M763.4 293.1L765.3 265.8M762.0 288.9L763.9 262.1M762.1 284.8L764.0 258.2M876.5 298.7L878.4 271.9M876.7 302.8L878.6 275.6M875.1 306.8L877.1 279.2M871.8 310.6L873.8 282.4M866.9 313.8L868.9 285.3M860.4 316.6L862.4 287.8M852.7 318.7L854.8 289.6M844.0 320.0L846.1 290.8M834.7 320.6L836.7 291.3M825.0 320.4L827.0 291.0M815.3 319.4L817.4 290.1M806.0 317.6L808.1 288.4M797.5 315.1L799.5 286.2M789.9 312.0L791.9 283.5M783.6 308.4L785.6 280.3M778.8 304.5L780.8 276.8M775.7 300.4L777.6 273.2M774.2 296.3L776.1 269.5M774.5 292.2L776.4 265.6" clip-path="url(#rimclip)" stroke="#fff" stroke-width="2.8" fill="none"/>
<path d="M983.6 242.3L985.5 215.4M984.9 246.2L986.8 219.1M985.6 250.2L987.5 222.5M985.7 254.1L987.7 226.0M985.2 258.0L987.2 229.4M984.1 261.9L986.1 232.8M982.3 265.7L984.4 236.2M980.0 269.5L982.1 239.5M977.0 273.2L979.2 242.7M973.5 276.7L975.6 245.8M969.3 280.2L971.5 248.8M964.5 283.5L966.7 251.7M959.2 286.6L961.4 254.4M953.2 289.6L955.5 257.0M946.8 292.4L949.1 259.5M939.8 295.0L942.2 261.7M932.4 297.3L934.7 263.8M924.5 299.5L926.8 265.7M916.1 301.4L918.5 267.3M907.4 303.1L909.8 268.7M898.3 304.5L900.7 270.0M888.9 305.6L891.4 270.9M879.3 306.5L881.7 271.7M869.4 307.1L871.9 272.2M859.4 307.4L861.8 272.4M849.2 307.5L851.7 272.4M839.0 307.2L841.4 272.2M828.7 306.7L831.2 271.7M818.5 305.9L820.9 270.9M808.3 304.8L810.7 270.0M798.2 303.5L800.6 268.7M788.3 301.9L790.7 267.3M778.6 300.0L781.0 265.7M769.1 297.9L771.5 263.8M760.0 295.6L762.3 261.7M751.1 293.1L753.5 259.5M742.7 290.3L745.0 257.0M734.6 287.4L736.9 254.4M727.0 284.3L729.3 251.7M719.8 281.1L722.1 248.8M713.2 277.7L715.4 245.8M707.0 274.1L709.2 242.7M701.4 270.5L703.6 239.5M696.3 266.8L698.5 236.2M691.8 263.0L693.9 232.8M687.9 259.1L690.0 229.4M684.5 255.2L686.6 226.0M681.8 251.3L683.8 222.5M679.6 247.3L681.6 219.1M678.0 243.4L680.0 215.6M677.0 239.5L678.9 212.2M676.6 235.6L678.5 208.8M676.8 231.8L678.7 205.3M970.9 240.4L972.2 222.7M972.1 244.3L973.3 226.4M972.6 248.2L973.9 229.8M972.5 252.1L973.8 233.3M971.7 255.9L973.0 236.7M970.3 259.7L971.6 240.1M968.2 263.5L969.6 243.4M965.4 267.1L966.8 246.7M962.0 270.7L963.4 249.8M957.9 274.1L959.4 252.8M953.2 277.4L954.7 255.7M947.9 280.5L949.4 258.4M942.0 283.4L943.6 261.0M935.5 286.1L937.1 263.4M928.5 288.6L930.1 265.6M921.0 290.9L922.6 267.6M913.0 292.9L914.6 269.4M904.5 294.6L906.2 270.9M895.7 296.1L897.4 272.2M886.5 297.4L888.2 273.3M877.1 298.3L878.7 274.1M867.3 298.9L869.0 274.6M857.4 299.3L859.1 274.9M847.4 299.3L849.1 274.9M837.3 299.1L839.0 274.6M827.1 298.5L828.8 274.1M817.0 297.7L818.7 273.3M807.0 296.5L808.7 272.3M797.1 295.1L798.8 271.0M787.4 293.4L789.0 269.4M777.9 291.5L779.6 267.7M768.7 289.3L770.4 265.7M759.9 286.8L761.5 263.5M751.4 284.2L753.0 261.1M743.4 281.3L745.0 258.5M735.8 278.3L737.4 255.8M728.7 275.1L730.3 252.9M722.2 271.7L723.7 249.9M716.1 268.2L717.6 246.8M710.7 264.6L712.2 243.6M705.9 260.9L707.3 240.2M701.6 257.1L703.0 236.9M698.0 253.2L699.4 233.4M695.0 249.3L696.4 230.0M692.7 245.4L694.0 226.5M691.0 241.5L692.3 223.0M689.9 237.7L691.1 219.6M689.4 233.8L690.7 216.1M689.6 230.0L690.8 212.6M958.6 241.8L959.3 231.5M959.3 245.7L960.1 235.0M959.4 249.7L960.2 238.5M958.7 253.5L959.5 242.0M957.3 257.4L958.1 245.4M955.1 261.1L956.0 248.8M952.3 264.7L953.1 252.0M948.7 268.2L949.6 255.2M944.4 271.6L945.3 258.2M939.4 274.8L940.3 261.0M933.7 277.8L934.7 263.7M927.4 280.6L928.4 266.2M920.5 283.1L921.5 268.5M913.1 285.4L914.1 270.5M905.1 287.5L906.1 272.3M896.6 289.2L897.7 273.8M887.7 290.6L888.8 275.1M878.5 291.8L879.6 276.1M869.0 292.6L870.1 276.8M859.2 293.1L860.3 277.2M849.2 293.3L850.3 277.3M839.1 293.1L840.2 277.2M829.0 292.6L830.1 276.7M818.9 291.8L820.0 275.9M808.8 290.7L809.9 274.9M799.0 289.3L800.1 273.6M789.3 287.6L790.4 272.0M779.9 285.6L781.0 270.2M770.8 283.3L771.9 268.1M762.2 280.7L763.2 265.8M753.9 278.0L755.0 263.3M746.2 275.0L747.2 260.6M739.0 271.8L740.0 257.7M732.4 268.5L733.3 254.7M726.3 265.0L727.3 251.5M720.9 261.3L721.8 248.2M716.1 257.6L717.0 244.9M712.1 253.8L712.9 241.4M708.7 249.9L709.5 237.9M706.0 246.0L706.8 234.4M704.0 242.1L704.8 230.9M702.7 238.2L703.5 227.4M702.1 234.3L702.9 223.9M702.2 230.5L703.0 220.3M944.4 237.9L944.6 234.9M945.7 241.8L945.9 238.7M946.3 245.6L946.5 242.3M946.1 249.5L946.3 245.8M945.0 253.3L945.3 249.2M943.2 257.1L943.5 252.6M940.6 260.7L941.0 255.9M937.2 264.2L937.6 259.1M933.1 267.6L933.5 262.1M928.2 270.7L928.6 265.0M922.5 273.7L923.0 267.6M916.2 276.4L916.7 270.1M909.3 278.8L909.7 272.3M901.7 281.0L902.2 274.2M893.6 282.9L894.1 275.9M885.0 284.5L885.5 277.3M876.0 285.7L876.5 278.4M866.7 286.6L867.2 279.1M857.1 287.1L857.6 279.6M847.2 287.3L847.8 279.7M837.3 287.2L837.8 279.6M827.3 286.6L827.8 279.1M817.3 285.8L817.8 278.2M807.4 284.6L808.0 277.1M797.8 283.0L798.3 275.7M788.4 281.2L788.9 274.0M779.3 279.0L779.8 272.0M770.6 276.6L771.1 269.8M762.4 273.9L762.9 267.3M754.7 271.0L755.2 264.6M747.6 267.8L748.0 261.7M741.1 264.5L741.5 258.7M735.2 261.0L735.6 255.5M730.1 257.4L730.4 252.2M725.6 253.6L726.0 248.8M721.9 249.8L722.3 245.3M719.0 246.0L719.3 241.8M716.8 242.1L717.1 238.3M715.4 238.2L715.7 234.8M714.8 234.4L715.0 231.3M714.9 230.6L715.1 227.6" stroke="#fff" stroke-width="2.8" fill="none"/>
<path d="M665.0 167.5L713.4 194.5" stroke="#00ee00" stroke-width="3"/>
<path d="M982.5 155.6L980 179" stroke="#fff" stroke-width="5"/>
<path d="M991 176L989 201" stroke="#fff" stroke-width="2.4"/>
<path d="M1000.6 203.4L998.4 229" stroke="#fff" stroke-width="2.6"/>
<path d="M1011 232L1008.4 260.3" stroke="#fff" stroke-width="2.8"/>
<path d="M1022.5 263.4L1019.4 291.6" stroke="#fff" stroke-width="3"/>
<path d="M1031.5 292L1028 320.6" stroke="#fff" stroke-width="5"/>
<path d="M978 290.6L975.6 318" stroke="#fff" stroke-width="2.4"/>
<path d="M713 145L712 168.5" stroke="#fff" stroke-width="2.2"/>
<path d="M667 167L656.4 304" stroke="#fff" stroke-width="4"/>
<path d="M673.7 13L672.5 39" stroke="#fff" stroke-width="2"/>
<path d="M672.5 39L669.3 142.5" stroke="#00ee00" stroke-width="3"/>
<path d="M669.3 142.5L667.3 168" stroke="#fff" stroke-width="5"/>
<path d="M819.5 64.5L817.5 92.5" stroke="#fff" stroke-width="2"/>
<path d="M817.5 92.5L804.5 280" stroke="#00ee00" stroke-width="3.8"/>
<path d="M845 73.5L815.5 147.5Q816 157 839 157.5Q862 157 862.8 150Z" fill="url(#blu)"/>
<path d="M822 364Q822 361.5 831 361.5Q840 361.8 840 364.5L840.8 384L822.3 384Z" fill="url(#redsh)"/>
<path d="M822.1 382L813.5 390.6L809.6 400L812 410L838.5 444.4L857.2 408.5L858.8 400L856.4 391.3L848.6 383.5L840.8 380.4Z" fill="url(#redc)"/>
</svg></div>
<div id="dlg">
<div class="b" style="left:1px;top:1px;width:551px;height:639px;background:#fff;"></div>
<div class="b" style="left:2px;top:31px;width:549px;height:608px;background:#f0f0f0;"></div>
<svg class="b" style="left:7px;top:5px" width="20" height="20" viewBox="7 5 20 20">
<defs><linearGradient id="tg" x1="0" x2="1"><stop offset="0" stop-color="#2b2b2b"/><stop offset=".5" stop-color="#e4e4e4"/><stop offset="1" stop-color="#2b2b2b"/></linearGradient>
<linearGradient id="tg2" x1="0" x2="1"><stop offset="0" stop-color="#222"/><stop offset=".5" stop-color="#9a9a9a"/><stop offset="1" stop-color="#222"/></linearGradient></defs>
<path d="M8.9 6.8Q17 7.8 25 6.8L24.6 8.4Q23 9 22 9H11.8Q10 9 9.2 8.4Z" fill="#1a1a1a"/>
<path d="M10.8 8.8H22.6Q21.6 12 19.6 13.8H13.8Q11.8 12 10.8 8.8Z" fill="url(#tg2)"/>
<path d="M14.2 13.4H19.6L19.6 20L18.9 23H14.9L14.2 20Z" fill="url(#tg)"/>
</svg>
<span class="t" style="left:30.50px;top:8.00px;font:12.3px/16px 'Liberation Sans',sans-serif;color:#999;transform:scaleX(0.9997);">Machining/welding project: Milling Settings</span>
<svg class="b" style="left:425px;top:1px" width="126" height="29" viewBox="0 0 126 29" fill="none" stroke="#8a8a8a" stroke-width="1">
<path d="M8 14.5H18"/><rect x="53.5" y="9.5" width="9" height="9"/><path d="M99 9L109 19M109 9L99 19"/></svg>
<span class="t" style="left:14.60px;top:46.00px;font:11.5px/16px 'Liberation Sans',sans-serif;color:#000;transform:scaleX(0.9445);">Robot:</span>
<span class="t" style="left:14.60px;top:68.00px;font:11.5px/16px 'Liberation Sans',sans-serif;color:#000;transform:scaleX(0.9422);">Reference:</span>
<span class="t" style="left:14.60px;top:91.00px;font:11.5px/16px 'Liberation Sans',sans-serif;color:#000;transform:scaleX(0.9469);">Tool:</span>
<div class="b" style="left:70px;top:42px;width:154px;height:22px;background:#e1e1e1;border:1px solid #adadad;"></div>
<svg class="b" style="left:211px;top:51px" width="7" height="4" viewBox="0 0 7 4"><path d="M0 0H7L3.5 4Z" fill="#000"/></svg>
<div class="b" style="left:70px;top:65px;width:154px;height:22px;background:#e1e1e1;border:1px solid #adadad;"></div>
<svg class="b" style="left:211px;top:74px" width="7" height="4" viewBox="0 0 7 4"><path d="M0 0H7L3.5 4Z" fill="#000"/></svg>
<div class="b" style="left:70px;top:88px;width:154px;height:22px;background:#e1e1e1;border:1px solid #adadad;"></div>
<svg class="b" style="left:211px;top:97px" width="7" height="4" viewBox="0 0 7 4"><path d="M0 0H7L3.5 4Z" fill="#000"/></svg>
<span class="t" style="left:94.00px;top:46.00px;font:11.5px/16px 'Liberation Sans',sans-serif;color:#000;transform:scaleX(0.9197);">ABB IRB 2600-20/1.65</span>
<span class="t" style="left:93.40px;top:68.00px;font:11.5px/16px 'Liberation Sans',sans-serif;color:#000;transform:scaleX(0.9073);">Milling Reference</span>
<span class="t" style="left:93.40px;top:91.00px;font:11.5px/16px 'Liberation Sans',sans-serif;color:#000;transform:scaleX(0.8759);">Spindle</span>
<svg class="b" style="left:74px;top:43px" width="20" height="20" viewBox="74 43 20 20">
<path d="M77 46.2L86 46.6Q89.8 47 89.6 49.6Q89.2 51 87.4 50.6L85.6 50.2L83.2 54.2Q87 53.4 87.8 55.6L87.6 57.6H80.6L80.2 55.2L83 49.6L77.4 48.4Z" fill="#e0691a"/>
<path d="M86 46.6Q89.8 47 89.6 49.6Q89.2 51 87.4 50.6L86.4 48.6Z" fill="#b8500f"/>
<path d="M80.8 57.2H88.6L89.2 59.4Q85 61.6 80.2 59.6Z" fill="#1c1c1c"/></svg>
<svg class="b" style="left:73px;top:66px" width="22" height="20" viewBox="73 66 22 20">
<path d="M86.3 68.4V79.4" stroke="#2a34e0" stroke-width="1.5"/><path d="M86.3 79.4L75.2 81.4" stroke="#e8364a" stroke-width="1.5"/><path d="M86.3 79.4L90.2 83" stroke="#28b060" stroke-width="1.5"/>
<circle cx="90.2" cy="83" r="1.2" fill="#28b060"/>
<circle cx="79" cy="74.3" r="3.9" fill="#2fc526"/><circle cx="78" cy="73" r="1.6" fill="#a8f2a0"/></svg>
<svg class="b" style="left:73px;top:89px" width="22" height="20" viewBox="73 89 22 20">
<path d="M77.6 92.4L80 91.4L88.4 97L91 102.6L88.6 101.6L84 97.2L79 96Z" fill="#69738f"/>
<path d="M80 100.4L83 99L87.2 105.8L85.8 106.6L82.6 104Z" fill="#7a84a0"/>
<circle cx="78.8" cy="97.3" r="3.9" fill="#2fc526"/><circle cx="77.8" cy="96" r="1.6" fill="#a8f2a0"/></svg>
<span class="t" style="left:14.60px;top:110.00px;font:11.5px/16px 'Liberation Sans',sans-serif;color:#000;transform:scaleX(0.9093);">Program:</span>
<span class="t" style="left:69.40px;top:110.00px;font:11.5px/16px 'Liberation Sans',sans-serif;color:#000;transform:scaleX(0.9256);">No program selected</span>
<div class="b" style="left:15px;top:127px;width:13px;height:13px;background:#fff;border:1px solid #333;"></div>
<svg class="b" style="left:15px;top:127px" width="13" height="13" viewBox="0 0 13 13"><path d="M2 6.4L5.5 9.9L11.2 2.8" fill="none" stroke="#222" stroke-width="1.3"/></svg>
<span class="t" style="left:33.00px;top:126.00px;font:11.5px/16px 'Liberation Sans',sans-serif;color:#000;transform:scaleX(0.9128);">Visible toolpath</span>
<div class="b" style="left:15px;top:149px;width:209px;height:101px;border:1px solid #dcdcdc;"></div>
<div class="b" style="left:20.4px;top:147px;width:55.00000000000001px;height:6px;background:#f0f0f0;"></div>
<span class="t" style="left:23.40px;top:142.00px;font:11.5px/16px 'Liberation Sans',sans-serif;color:#000;transform:scaleX(0.9462);">Path input</span>
<div class="b" style="left:21px;top:164px;width:97px;height:20px;background:#e1e1e1;border:1px solid #adadad;"></div>
<svg class="b" style="left:105px;top:172px" width="7" height="4" viewBox="0 0 7 4"><path d="M0 0H7L3.5 4Z" fill="#000"/></svg>
<span class="t" style="left:24.40px;top:167.00px;font:11.5px/16px 'Liberation Sans',sans-serif;color:#000;transform:scaleX(0.9015);">Select NC file</span>
<div class="b" style="left:124px;top:163px;width:93px;height:22px;background:#e1e1e1;border:1px solid #adadad;"></div>
<span class="t" style="left:140.60px;top:167.00px;font:11.5px/16px 'Liberation Sans',sans-serif;color:#000;transform:scaleX(0.8986);">Select NC file</span>
<span class="t" style="left:20.60px;top:190.00px;font:11.5px/16px 'Liberation Sans',sans-serif;color:#000;transform:scaleX(0.9481);">Path points: 918</span>
<span class="t" style="left:20.60px;top:203.00px;font:11.5px/16px 'Liberation Sans',sans-serif;color:#000;transform:scaleX(0.9208);">Original file: Milling Bowl 3x.nc</span>
<div class="b" style="left:22px;top:223px;width:195px;height:21px;background:#e1e1e1;border:1px solid #adadad;"></div>
<span class="t" style="left:80.40px;top:226.00px;font:11.5px/16px 'Liberation Sans',sans-serif;color:#000;transform:scaleX(0.9218);">Program Events</span>
<span class="t" style="left:288.00px;top:49.00px;font:11.5px/16px 'Liberation Sans',sans-serif;color:#000;transform:scaleX(0.9142);">Approach</span>
<div class="b" style="left:372px;top:46px;width:82px;height:21px;background:#e1e1e1;border:1px solid #adadad;"></div>
<span class="t" style="left:402.60px;top:49.00px;font:11.5px/16px 'Liberation Sans',sans-serif;color:#000;transform:scaleX(0.8993);">Add</span>
<div class="b" style="left:456px;top:46px;width:81px;height:21px;background:#e1e1e1;border:1px solid #adadad;"></div>
<span class="t" style="left:476.40px;top:49.00px;font:11.5px/16px 'Liberation Sans',sans-serif;color:#000;transform:scaleX(0.9015);">Remove</span>
<div class="b" style="left:285px;top:68px;width:256px;height:79px;background:#fff;border:1px solid #828790;"></div>
<div class="b" style="left:386px;top:69px;width:1px;height:45px;background:#e4e4e4;"></div>
<div class="b" style="left:457px;top:69px;width:1px;height:46px;background:#dadada;"></div>
<div class="b" style="left:386px;top:114px;width:72px;height:1px;background:#dadada;"></div>
<span class="t" style="left:321.60px;top:73.00px;font:12.5px/16px 'Liberation Sans',sans-serif;color:#000;transform:scaleX(0.9851);">mode</span>
<span class="t" style="left:392.00px;top:73.00px;font:12.5px/16px 'Liberation Sans',sans-serif;color:#000;transform:scaleX(0.9664);">value (mm)</span>
<div class="b" style="left:286px;top:92px;width:100px;height:22px;background:#e1e1e1;border:1px solid #adadad;"></div>
<svg class="b" style="left:373px;top:101px" width="7" height="4" viewBox="0 0 7 4"><path d="M0 0H7L3.5 4Z" fill="#000"/></svg>
<span class="t" style="left:290.40px;top:96.00px;font:12.5px/16px 'Liberation Sans',sans-serif;color:#000;transform:scaleX(0.9836);">normal (n+)</span>
<span class="t" style="left:408.60px;top:96.00px;font:12.5px/16px 'Liberation Sans',sans-serif;color:#000;transform:scaleX(0.8441);">100.0</span>
<span class="t" style="left:288.00px;top:152.00px;font:11.5px/16px 'Liberation Sans',sans-serif;color:#000;transform:scaleX(0.9605);">Retract</span>
<div class="b" style="left:372px;top:149px;width:82px;height:21px;background:#e1e1e1;border:1px solid #adadad;"></div>
<span class="t" style="left:402.60px;top:152.00px;font:11.5px/16px 'Liberation Sans',sans-serif;color:#000;transform:scaleX(0.8993);">Add</span>
<div class="b" style="left:456px;top:149px;width:81px;height:21px;background:#e1e1e1;border:1px solid #adadad;"></div>
<span class="t" style="left:476.40px;top:152.00px;font:11.5px/16px 'Liberation Sans',sans-serif;color:#000;transform:scaleX(0.9015);">Remove</span>
<div class="b" style="left:285px;top:171px;width:256px;height:80px;background:#fff;border:1px solid #828790;"></div>
<div class="b" style="left:386px;top:172px;width:1px;height:45px;background:#e4e4e4;"></div>
<div class="b" style="left:457px;top:172px;width:1px;height:46px;background:#dadada;"></div>
<div class="b" style="left:386px;top:217px;width:72px;height:1px;background:#dadada;"></div>
<span class="t" style="left:321.60px;top:176.00px;font:12.5px/16px 'Liberation Sans',sans-serif;color:#000;transform:scaleX(0.9851);">mode</span>
<span class="t" style="left:392.00px;top:176.00px;font:12.5px/16px 'Liberation Sans',sans-serif;color:#000;transform:scaleX(0.9664);">value (mm)</span>
<div class="b" style="left:286px;top:195px;width:100px;height:22px;background:#e1e1e1;border:1px solid #adadad;"></div>
<svg class="b" style="left:373px;top:204px" width="7" height="4" viewBox="0 0 7 4"><path d="M0 0H7L3.5 4Z" fill="#000"/></svg>
<span class="t" style="left:290.40px;top:199.00px;font:12.5px/16px 'Liberation Sans',sans-serif;color:#000;transform:scaleX(0.9836);">normal (n+)</span>
<span class="t" style="left:408.60px;top:199.00px;font:12.5px/16px 'Liberation Sans',sans-serif;color:#000;transform:scaleX(0.8441);">100.0</span>
<span class="t" style="left:11.40px;top:272.00px;font:11.5px/16px 'Liberation Sans',sans-serif;color:#000;transform:scaleX(0.9905);">Path to tool offset:</span>
<div class="b" style="left:110px;top:259px;width:338px;height:20px;background:#e1e1e1;border:1px solid #adadad;"></div>
<svg class="b" style="left:435px;top:267px" width="7" height="4" viewBox="0 0 7 4"><path d="M0 0H7L3.5 4Z" fill="#000"/></svg>
<span class="t" style="left:114.60px;top:262.00px;font:10.2px/16px 'Liberation Mono',monospace;color:#000;transform:scaleX(0.9747);">[X,Y,Z]mm | Rot[X,Y ,Z  ]deg - Generic (default)</span>
<div class="b" style="left:452px;top:258px;width:26px;height:22px;background:#dcdcdc;border:1px solid #bcbcbc;"></div>
<svg class="b" style="left:457px;top:261px" width="16" height="16" viewBox="0 0 16 16">
<rect x="1.5" y="1.5" width="9" height="9" fill="#e6e6e6" stroke="#cfcfcf"/><rect x="4.5" y="4.5" width="10" height="10" fill="#efefef" stroke="#c4c4c4"/>
<path d="M6.5 7.5H12.5M6.5 9.5H12.5M6.5 11.5H12.5" stroke="#c6c6c6"/><path d="M11 15L15 15L15 11Z" fill="#a8a8a8"/></svg>
<div class="b" style="left:483px;top:258px;width:26px;height:22px;background:#e1e1e1;border:1px solid #adadad;"></div>
<svg class="b" style="left:488px;top:260px" width="16" height="18" viewBox="0 0 16 18">
<path d="M2 3.5H13V15.5H2Z" fill="#d9a066"/><path d="M5 2H10V5H5Z" fill="#bfbfbf"/><path d="M6.3 1H8.7V2.5H6.3Z" fill="#a8a8a8"/>
<path d="M6 6.5H12L14 8.5V16H6Z" fill="#fafafa" stroke="#e2e2e2" stroke-width=".6"/></svg>
<div class="b" style="left:514px;top:258px;width:26px;height:22px;background:#e1e1e1;border:1px solid #adadad;"></div>
<svg class="b" style="left:521px;top:262px" width="12" height="13" viewBox="0 0 12 13"><path d="M0 2.2H12M0 6.6H12M0 11H12" stroke="#000" stroke-width="2.5"/></svg>
<div class="b" style="left:110px;top:281px;width:431px;height:20px;background:#fff;border:1px solid #7a7a7a;"></div>
<span class="t" style="left:113.40px;top:284.00px;font:10.2px/16px 'Liberation Mono',monospace;color:#000;transform:scaleX(0.9848);">rotz(0)</span>
<span class="t" style="left:11.40px;top:312.00px;font:11.5px/16px 'Liberation Sans',sans-serif;color:#000;transform:scaleX(0.9294);">Select algorithm:</span>
<div class="b" style="left:98px;top:309px;width:180px;height:20px;background:#e1e1e1;border:1px solid #adadad;"></div>
<svg class="b" style="left:265px;top:317px" width="7" height="4" viewBox="0 0 7 4"><path d="M0 0H7L3.5 4Z" fill="#000"/></svg>
<span class="t" style="left:101.40px;top:312.00px;font:11.5px/16px 'Liberation Sans',sans-serif;color:#000;transform:scaleX(0.9243);">Minimum tool orientation change</span>
<svg class="b" style="left:290px;top:311px" width="16" height="16" viewBox="0 0 16 16"><path d="M8 1V15M1 8H15" stroke="#2e7fd6" stroke-width="3.2"/></svg>
<div class="b" style="left:393px;top:308px;width:147px;height:22px;background:#e1e1e1;border:1px solid #adadad;"></div>
<div class="b" style="left:398px;top:313.0px;width:12px;height:12px;border:1px solid #333;border-radius:50%;background:#f0f0f0"></div>
<span class="t" style="left:415.40px;top:312.00px;font:11.5px/16px 'Liberation Sans',sans-serif;color:#000;transform:scaleX(0.9609);">Show preferred tool path</span>
<div class="b" style="left:12px;top:343px;width:529px;height:76px;border:1px solid #dcdcdc;"></div>
<div class="b" style="left:17.6px;top:341px;width:122.80000000000001px;height:6px;background:#f0f0f0;"></div>
<span class="t" style="left:20.60px;top:336.00px;font:11.5px/16px 'Liberation Sans',sans-serif;color:#000;transform:scaleX(0.9324);">Optimization parameters</span>
<div class="b" style="left:23px;top:361px;width:73px;height:21px;background:#e1e1e1;border:1px solid #adadad;"></div>
<span class="t" style="left:32.40px;top:364.00px;font:11.5px/16px 'Liberation Sans',sans-serif;color:#000;transform:scaleX(0.9749);">Set default</span>
<div class="b" style="left:382px;top:361px;width:148px;height:22px;background:#e1e1e1;border:1px solid #adadad;"></div>
<div class="b" style="left:387px;top:366.0px;width:12px;height:12px;border:1px solid #333;border-radius:50%;background:#f0f0f0"></div>
<span class="t" style="left:404.30px;top:365.00px;font:11.5px/16px 'Liberation Sans',sans-serif;color:#000;transform:scaleX(0.9425);">Show estimated tool path</span>
<span class="t" style="left:22.00px;top:393.00px;font:11.5px/16px 'Liberation Sans',sans-serif;color:#000;transform:scaleX(0.9765);">Allow a tool Z rotation of +/-</span>
<div class="b" style="left:165px;top:390px;width:59px;height:20px;background:#fff;border:1px solid #7a7a7a;"></div>
<div class="b" style="left:208px;top:392px;width:14px;height:8px;background:#e8e8e8;border:1px solid #c8c8c8;"></div>
<div class="b" style="left:208px;top:400px;width:14px;height:8px;background:#e8e8e8;border:1px solid #c8c8c8;"></div>
<svg class="b" style="left:211.5px;top:394px" width="7" height="12" viewBox="0 0 7 12"><path d="M0.5 4L3.5 0.6L6.5 4Z M0.5 8L3.5 11.4L6.5 8Z" fill="#000"/></svg>
<span class="t" style="left:169.00px;top:393.00px;font:11.5px/16px 'Liberation Sans',sans-serif;color:#000;transform:scaleX(0.9212);">180.00</span>
<span class="t" style="left:229.60px;top:393.00px;font:11.5px/16px 'Liberation Sans',sans-serif;color:#000;transform:scaleX(0.9668);">deg by steps of</span>
<div class="b" style="left:311px;top:390px;width:59px;height:20px;background:#fff;border:1px solid #7a7a7a;"></div>
<div class="b" style="left:354px;top:392px;width:14px;height:8px;background:#e8e8e8;border:1px solid #c8c8c8;"></div>
<div class="b" style="left:354px;top:400px;width:14px;height:8px;background:#e8e8e8;border:1px solid #c8c8c8;"></div>
<svg class="b" style="left:357.5px;top:394px" width="7" height="12" viewBox="0 0 7 12"><path d="M0.5 4L3.5 0.6L6.5 4Z M0.5 8L3.5 11.4L6.5 8Z" fill="#000"/></svg>
<span class="t" style="left:321.40px;top:393.00px;font:11.5px/16px 'Liberation Sans',sans-serif;color:#000;transform:scaleX(0.9244);">20.00</span>
<span class="t" style="left:375.60px;top:393.00px;font:11.5px/16px 'Liberation Sans',sans-serif;color:#000;transform:scaleX(0.9069);">deg</span>
<div class="b" style="left:12px;top:432px;width:529px;height:50px;border:1px solid #dcdcdc;"></div>
<div class="b" style="left:17.6px;top:430px;width:169.8px;height:6px;background:#f0f0f0;"></div>
<span class="t" style="left:20.60px;top:425.00px;font:11.5px/16px 'Liberation Sans',sans-serif;color:#000;transform:scaleX(0.9782);">Preferred joints for the start point</span>
<div class="b" style="left:22px;top:451px;width:75px;height:20px;background:#fff;border:1px solid #7a7a7a;"></div>
<div class="b" style="left:81px;top:453px;width:14px;height:8px;background:#e8e8e8;border:1px solid #c8c8c8;"></div>
<div class="b" style="left:81px;top:461px;width:14px;height:8px;background:#e8e8e8;border:1px solid #c8c8c8;"></div>
<svg class="b" style="left:84.5px;top:455px" width="7" height="12" viewBox="0 0 7 12"><path d="M0.5 4L3.5 0.6L6.5 4Z M0.5 8L3.5 11.4L6.5 8Z" fill="#000"/></svg>
<span class="t" style="left:25.00px;top:454.00px;font:11.5px/16px 'Liberation Sans',sans-serif;color:#000;transform:scaleX(0.9383);">0.0000</span>
<div class="b" style="left:98px;top:451px;width:71px;height:20px;background:#fff;border:1px solid #7a7a7a;"></div>
<div class="b" style="left:153px;top:453px;width:14px;height:8px;background:#e8e8e8;border:1px solid #c8c8c8;"></div>
<div class="b" style="left:153px;top:461px;width:14px;height:8px;background:#e8e8e8;border:1px solid #c8c8c8;"></div>
<svg class="b" style="left:156.5px;top:455px" width="7" height="12" viewBox="0 0 7 12"><path d="M0.5 4L3.5 0.6L6.5 4Z M0.5 8L3.5 11.4L6.5 8Z" fill="#000"/></svg>
<span class="t" style="left:101.00px;top:454.00px;font:11.5px/16px 'Liberation Sans',sans-serif;color:#000;transform:scaleX(0.9383);">0.0000</span>
<div class="b" style="left:170px;top:451px;width:75px;height:20px;background:#fff;border:1px solid #7a7a7a;"></div>
<div class="b" style="left:229px;top:453px;width:14px;height:8px;background:#e8e8e8;border:1px solid #c8c8c8;"></div>
<div class="b" style="left:229px;top:461px;width:14px;height:8px;background:#e8e8e8;border:1px solid #c8c8c8;"></div>
<svg class="b" style="left:232.5px;top:455px" width="7" height="12" viewBox="0 0 7 12"><path d="M0.5 4L3.5 0.6L6.5 4Z M0.5 8L3.5 11.4L6.5 8Z" fill="#000"/></svg>
<span class="t" style="left:173.00px;top:454.00px;font:11.5px/16px 'Liberation Sans',sans-serif;color:#000;transform:scaleX(0.9383);">0.0000</span>
<div class="b" style="left:246px;top:451px;width:75px;height:20px;background:#fff;border:1px solid #7a7a7a;"></div>
<div class="b" style="left:305px;top:453px;width:14px;height:8px;background:#e8e8e8;border:1px solid #c8c8c8;"></div>
<div class="b" style="left:305px;top:461px;width:14px;height:8px;background:#e8e8e8;border:1px solid #c8c8c8;"></div>
<svg class="b" style="left:308.5px;top:455px" width="7" height="12" viewBox="0 0 7 12"><path d="M0.5 4L3.5 0.6L6.5 4Z M0.5 8L3.5 11.4L6.5 8Z" fill="#000"/></svg>
<span class="t" style="left:249.00px;top:454.00px;font:11.5px/16px 'Liberation Sans',sans-serif;color:#000;transform:scaleX(0.9383);">0.0000</span>
<div class="b" style="left:322px;top:451px;width:75px;height:20px;background:#fff;border:1px solid #7a7a7a;"></div>
<div class="b" style="left:381px;top:453px;width:14px;height:8px;background:#e8e8e8;border:1px solid #c8c8c8;"></div>
<div class="b" style="left:381px;top:461px;width:14px;height:8px;background:#e8e8e8;border:1px solid #c8c8c8;"></div>
<svg class="b" style="left:384.5px;top:455px" width="7" height="12" viewBox="0 0 7 12"><path d="M0.5 4L3.5 0.6L6.5 4Z M0.5 8L3.5 11.4L6.5 8Z" fill="#000"/></svg>
<span class="t" style="left:325.00px;top:454.00px;font:11.5px/16px 'Liberation Sans',sans-serif;color:#000;transform:scaleX(0.9383);">0.0000</span>
<div class="b" style="left:398px;top:451px;width:75px;height:20px;background:#fff;border:1px solid #7a7a7a;"></div>
<div class="b" style="left:457px;top:453px;width:14px;height:8px;background:#e8e8e8;border:1px solid #c8c8c8;"></div>
<div class="b" style="left:457px;top:461px;width:14px;height:8px;background:#e8e8e8;border:1px solid #c8c8c8;"></div>
<svg class="b" style="left:460.5px;top:455px" width="7" height="12" viewBox="0 0 7 12"><path d="M0.5 4L3.5 0.6L6.5 4Z M0.5 8L3.5 11.4L6.5 8Z" fill="#000"/></svg>
<span class="t" style="left:401.00px;top:454.00px;font:11.5px/16px 'Liberation Sans',sans-serif;color:#000;transform:scaleX(0.9383);">0.0000</span>
<div class="b" style="left:475px;top:450px;width:26px;height:22px;background:#dcdcdc;border:1px solid #bcbcbc;"></div>
<svg class="b" style="left:480px;top:453px" width="16" height="16" viewBox="0 0 16 16">
<rect x="1.5" y="1.5" width="9" height="9" fill="#e6e6e6" stroke="#cfcfcf"/><rect x="4.5" y="4.5" width="10" height="10" fill="#efefef" stroke="#c4c4c4"/>
<path d="M6.5 7.5H12.5M6.5 9.5H12.5M6.5 11.5H12.5" stroke="#c6c6c6"/><path d="M11 15L15 15L15 11Z" fill="#a8a8a8"/></svg>
<div class="b" style="left:504px;top:450px;width:27px;height:22px;background:#e1e1e1;border:1px solid #adadad;"></div>
<svg class="b" style="left:509px;top:452px" width="16" height="18" viewBox="0 0 16 18">
<path d="M2 3.5H13V15.5H2Z" fill="#d9a066"/><path d="M5 2H10V5H5Z" fill="#bfbfbf"/><path d="M6.3 1H8.7V2.5H6.3Z" fill="#a8a8a8"/>
<path d="M6 6.5H12L14 8.5V16H6Z" fill="#fafafa" stroke="#e2e2e2" stroke-width=".6"/></svg>
<div class="b" style="left:12px;top:491px;width:13px;height:13px;background:#fff;border:1px solid #333;"></div>
<svg class="b" style="left:12px;top:491px" width="13" height="13" viewBox="0 0 13 13"><path d="M2 6.4L5.5 9.9L11.2 2.8" fill="none" stroke="#222" stroke-width="1.3"/></svg>
<span class="t" style="left:29.60px;top:490.00px;font:11.5px/16px 'Liberation Sans',sans-serif;color:#000;transform:scaleX(0.9614);">auto update</span>
<span class="t" style="left:11.60px;top:556.00px;font:11.5px/16px 'Liberation Sans',sans-serif;color:#000;transform:scaleX(0.9449);">All targets are reachable.</span>
<span class="t" style="left:11.60px;top:569.00px;font:11.5px/16px 'Liberation Sans',sans-serif;color:#000;transform:scaleX(0.9289);">Check path.</span>
<div class="b" style="left:386px;top:490px;width:73px;height:138px;background:#e1e1e1;border:1px solid #adadad;"></div>
<span class="t" style="left:404.00px;top:552.00px;font:11.5px/16px 'Liberation Sans',sans-serif;color:#000;transform:scaleX(0.9520);">Update</span>
<div class="b" style="left:467px;top:490px;width:73px;height:138px;background:#cccccc;border:1px solid #bfbfbf;"></div>
<span class="t" style="left:482.40px;top:552.00px;font:11.5px/16px 'Liberation Sans',sans-serif;color:#838383;transform:scaleX(0.8940);">Simulate</span>
<svg class="b" style="left:238px;top:488px" width="146" height="146" viewBox="238 488 146 146">
<defs>
<linearGradient id="ring" x1="0" y1="0" x2="1" y2="1"><stop offset="0" stop-color="#1c69cc"/><stop offset=".45" stop-color="#3f93e0"/><stop offset=".8" stop-color="#86d0f4"/><stop offset="1" stop-color="#5ab4ea"/></linearGradient>
<radialGradient id="disc" cx=".42" cy=".3" r=".8"><stop offset="0" stop-color="#ffffff"/><stop offset=".65" stop-color="#f3f3f3"/><stop offset="1" stop-color="#d0d0d0"/></radialGradient>
<linearGradient id="qm" x1="0" y1="0" x2="0" y2="1"><stop offset="0" stop-color="#1f74d2"/><stop offset=".6" stop-color="#5db2ea"/><stop offset="1" stop-color="#2f8be0"/></linearGradient>
<radialGradient id="gr" cx=".4" cy=".3" r=".75"><stop offset="0" stop-color="#58ee6a"/><stop offset=".5" stop-color="#1fd034"/><stop offset="1" stop-color="#0fae22"/></radialGradient>
</defs>
<circle cx="308" cy="558.5" r="66" fill="url(#ring)"/>
<circle cx="308" cy="558.5" r="56" fill="url(#disc)"/>
<g transform="translate(308.5 599) scale(1.06 1.36)"><text x="0" y="0" font-family="Liberation Sans, sans-serif" font-weight="bold" font-size="86" text-anchor="middle" fill="url(#qm)">?</text></g>
<circle cx="348" cy="596.7" r="32" fill="#0c9a1e"/>
<circle cx="348" cy="596.7" r="30.3" fill="url(#gr)"/>
<path d="M323 595L331 591.5Q340 595 346 601Q354 585 367.5 578.5L367.5 583Q357 598 353 616.5L343 619Q336 606 323 595Z" fill="#fff"/>
</svg>

</div>
</body></html>
